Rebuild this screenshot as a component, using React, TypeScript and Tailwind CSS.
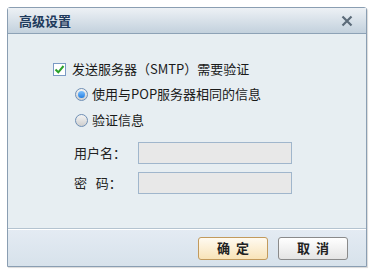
import React, { useState } from 'react';

const font = { fontFamily: '"Microsoft YaHei", "Noto Sans CJK SC", sans-serif' };

export default function App() {
    const [auth, setAuth] = useState(true);
    const [mode, setMode] = useState<'same' | 'custom'>('same');

    return (
        <div className="w-[374px] h-[274px] bg-white pt-[7px] pl-[7px]" style={font}>
            <div className="w-[360px] h-[260px] flex flex-col border border-[#8a9eb2] rounded-t-[3px] bg-[#e7eef2] shadow-[1px_1px_1px_rgba(0,0,0,0.15)]">
                {/* 标题栏 */}
                <div className="h-[26px] flex items-center justify-between px-[11px] border-b border-[#8da2b6] bg-gradient-to-b from-[#edf1f5] to-[#c3d1dd]">
                    <span className="text-[13px] font-bold text-[#1e3a5c]">高级设置</span>
                    <svg width="12" height="12" viewBox="0 0 12 12" className="mr-[2px]">
                        <path d="M1.5 1.5 L10.5 10.5 M10.5 1.5 L1.5 10.5" stroke="#5c6b79" strokeWidth="2.2" />
                    </svg>
                </div>

                {/* 内容 */}
                <div className="flex-1 pl-[45px] pt-[26px] text-[13px] text-[#1a1a1a]">
                    <label className="flex items-center gap-[6px] h-[18px]" onClick={() => setAuth(!auth)}>
                        <span className="w-[13px] h-[13px] border border-[#7a9ac4] bg-white flex items-center justify-center">
                            {auth && (
                                <svg width="11" height="11" viewBox="0 0 11 11">
                                    <path d="M1.5 5.5 L4.3 8.3 L9.5 2" stroke="#2aa12a" strokeWidth="2" fill="none" />
                                </svg>
                            )}
                        </span>
                        <span>发送服务器（SMTP）需要验证</span>
                    </label>

                    <div className="pl-[22px] mt-[7px] flex flex-col gap-[8px]">
                        <label className="flex items-center gap-[4px] h-[18px]" onClick={() => setMode('same')}>
                            <Radio checked={mode === 'same'} />
                            <span>使用与POP服务器相同的信息</span>
                        </label>
                        <label className="flex items-center gap-[4px] h-[18px]" onClick={() => setMode('custom')}>
                            <Radio checked={mode === 'custom'} />
                            <span>验证信息</span>
                        </label>
                    </div>

                    <div className="mt-[13px] pl-[21px] flex flex-col gap-[8px]">
                        <div className="flex items-center">
                            <span className="w-[64px] text-[#222]">用户名：</span>
                            <input disabled className="w-[154px] h-[22px] border border-[#a0b6cc] bg-[#e8e8e8]" />
                        </div>
                        <div className="flex items-center">
                            <span className="w-[64px] text-[#222]">密&nbsp;&nbsp;&nbsp;码：</span>
                            <input disabled type="password" className="w-[154px] h-[22px] border border-[#a0b6cc] bg-[#e8e8e8]" />
                        </div>
                    </div>
                </div>

                {/* 底部按钮 */}
                <div className="h-[38px] border-t border-[#b4c3d0] shadow-[inset_0_1px_0_#ffffff] bg-gradient-to-b from-[#e4ebf3] to-[#d7e2eb] flex items-center justify-end gap-[10px] pr-[18px] pt-[1px]">
                    <button className="w-[70px] h-[23px] rounded-[3px] border border-[#c29a5c] bg-gradient-to-b from-[#fffaf0] to-[#f8e3b8] text-[13px] font-bold text-[#222] tracking-[6px] pl-[6px]">
                        确定
                    </button>
                    <button className="w-[70px] h-[23px] rounded-[3px] border border-[#8a8a8a] bg-gradient-to-b from-[#ffffff] to-[#e4e4e4] text-[13px] font-bold text-[#222] tracking-[6px] pl-[6px]">
                        取消
                    </button>
                </div>
            </div>
        </div>
    );
}

function Radio({ checked }: { checked: boolean }) {
    return (
        <span className="w-[13px] h-[13px] rounded-full border border-[#6f8fb5] bg-gradient-to-b from-[#f4f4f4] to-[#cfcfcf] flex items-center justify-center">
            {checked && <span className="w-[7px] h-[7px] rounded-full bg-gradient-to-b from-[#7ec2ff] to-[#1e7de0]" />}
        </span>
    );
}
